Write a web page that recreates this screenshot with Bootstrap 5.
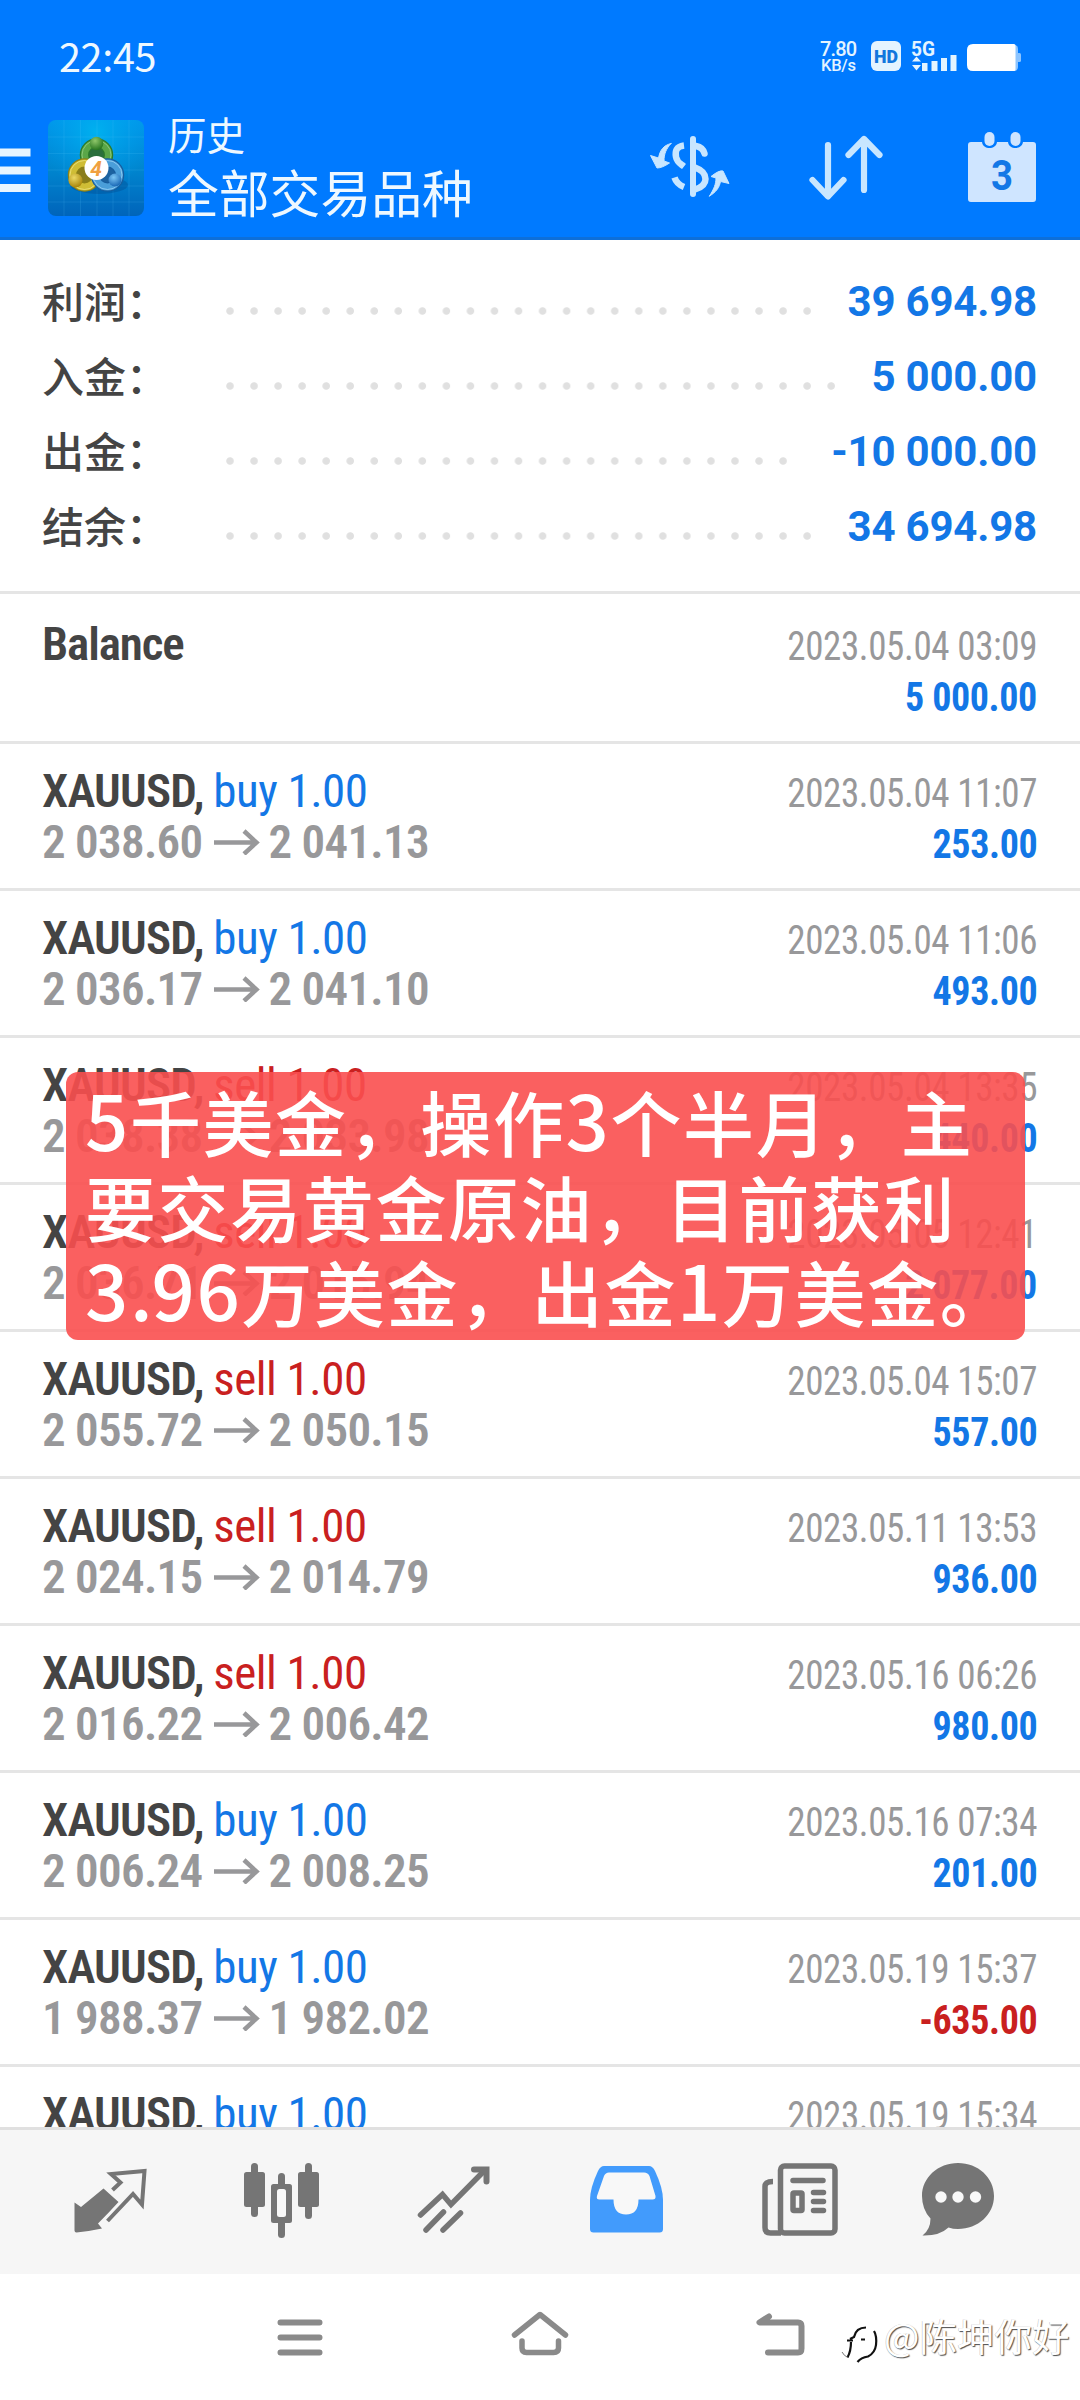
<!DOCTYPE html>
<html lang="zh-CN">
<head>
<meta charset="utf-8">
<meta name="viewport" content="width=device-width, initial-scale=1">
<title>历史</title>
<link href="https://cdn.jsdelivr.net/npm/bootstrap@5.3.0/dist/css/bootstrap.min.css" rel="stylesheet">
<style>
  body { font-family: Roboto, "Noto Sans CJK SC", sans-serif; color: #444; background: #fff; }
  svg { display: block; flex: none; }
  .screen { width: 1080px; height: 2400px; }
  .cjk { font-family: "Noto Sans CJK SC", sans-serif; }

  .app-header { height: 240px; background: #007aff; border-bottom: 3px solid #0d6fd9; color: #eef8ff; }
  .status-bar { height: 114px; padding: 0 57px 0 59px; }
  .clock { font-size: 39.5px; line-height: 110px; height: 114px; letter-spacing: -.3px; }
  .title-row { height: 108px; }
  .title-sub { font-size: 38.5px; line-height: 39px; font-weight: 400; }
  .title-main { font-size: 50.8px; line-height: 60px; padding-top: 8px; font-weight: 400; }

  .summary { padding: 24px 43px 0 42px; height: 354px; border-bottom: 3px solid #e5e5e5; }
  .sum-line { height: 75px; }
  .sum-label { font-size: 42px; line-height: 72px; height: 75px; width: 184px; font-weight: 500; }
  .dots { height: 8px; margin-top: 18px; background: radial-gradient(circle at 4px 4px, #e0e0e0 3.3px, transparent 4.2px) 0 0 / 24.05px 8px repeat-x; }
  .sum-value { font-size: 42px; font-weight: 700; line-height: 79px; color: #1377e6; letter-spacing: -.2px; }

  .history { height: 1533px; overflow: hidden; }
  .deal { height: 147px; padding: 21px 43px 0 42px; border-bottom: 3px solid #e5e5e5; font-family: "Roboto Condensed", Roboto, sans-serif; }
  .deal-balance { height: 150px; padding-top: 24px; }
  .deal-balance .profit { padding-top: 3px; }
  .deal-line { height: 51px; line-height: 51px; }
  .sym { font-size: 47px; font-weight: 600; color: #444; letter-spacing: -.8px; }
  .deal-balance .sym { letter-spacing: -1.1px; }
  .side { font-size: 47px; letter-spacing: -.5px; margin-left: 6px; }
  .buy { color: #1377e6; }
  .sell { color: #c9201f; }
  .price { font-size: 47px; font-weight: 600; color: #98989a; letter-spacing: -.7px; }
  .stamp { font-size: 40px; color: #98989a; letter-spacing: -.4px; transform: scaleX(.925); transform-origin: right; }
  .profit { font-size: 40px; font-weight: 700; letter-spacing: -.4px; transform: scaleX(.95); transform-origin: right; }

  .caption-box { left: 66px; top: 1072px; width: 959px; height: 268px; border-radius: 12px; background: rgba(250,79,79,.9); color: #fff; padding: 6px 0 0 19px; font-size: 71px; line-height: 85px; font-weight: 500; letter-spacing: 1.6px; white-space: nowrap; }
  .num { font-size: 76px; letter-spacing: 1.6px; line-height: 1; }
  .pt { letter-spacing: -1px; }

  .tab-bar { height: 147px; background: #f6f6f6; border-top: 3px solid #e0e0e0; padding-left: 24px; }
  .nav-keys { height: 126px; }
  .signature { left: 838px; top: 2311px; color: #fff; font-size: 37.5px; line-height: 48px; text-shadow: 1px 1px 1px rgba(0,0,0,.7), -.5px 0 0 rgba(0,0,0,.25); }
</style>
</head>
<body>
<div class="screen position-relative overflow-hidden">

  <header class="app-header">
    <div class="status-bar d-flex justify-content-between align-items-center">
      <span class="clock cjk">22:45</span>
      <svg width="208" height="48" viewBox="814 34 208 48" fill="#e4f4ff">
        <g font-family="Roboto, sans-serif" font-weight="500">
          <text x="819" y="56.5" font-size="20" textLength="37">7.80</text>
          <text x="820" y="72" font-size="16.5" textLength="35">KB/s</text>
          <text x="910" y="57" font-size="20" font-weight="700" textLength="24" lengthAdjust="spacingAndGlyphs">5G</text>
        </g>
        <rect x="870" y="42" width="30" height="30" rx="6"/>
        <text x="873" y="64" font-size="19" font-weight="900" fill="#1277dd" font-family="Roboto, sans-serif" textLength="24" lengthAdjust="spacingAndGlyphs">HD</text>
        <path d="M911 62.500h9l-4.500-5zM911 66h9l-4.500 5.500z"/>
        <path d="M921 64h5.500v8h-5.500zM930.500 62h6v10h-6zM940 59h6v13h-6zM949.500 56h6v16h-6z"/>
        <rect x="1008" y="46" width="9" height="26" rx="4" fill="#8cc4ff"/>
        <rect x="1016" y="54" width="4" height="9" rx="1.500" fill="#8cc4ff"/>
        <path d="M972 45h41q1.500 0 1.500 1.500v24q0 1.500-1.500 1.500h-41q-6 0-6-6V51q0-6 6-6z" fill="#fff"/>
      </svg>
    </div>

    <div class="title-row d-flex align-items-start">
      <svg width="168" height="110" viewBox="0 114 168 110">
        <defs>
          <linearGradient id="tile" x1="0" y1="0" x2="0" y2="1"><stop offset="0" stop-color="#0097ea"/><stop offset=".5" stop-color="#0086cf"/><stop offset="1" stop-color="#0064ba"/></linearGradient>
          <radialGradient id="glow" cx=".5" cy=".12" r=".6"><stop offset="0" stop-color="#00b4f0" stop-opacity=".9"/><stop offset="1" stop-color="#00a0f0" stop-opacity="0"/></radialGradient>
          <radialGradient id="green" cx=".4" cy=".3" r=".7"><stop offset="0" stop-color="#8fc76a"/><stop offset="1" stop-color="#26751f"/></radialGradient>
          <radialGradient id="gold" cx=".4" cy=".3" r=".7"><stop offset="0" stop-color="#ecd964"/><stop offset="1" stop-color="#a9850c"/></radialGradient>
          <radialGradient id="azure" cx=".4" cy=".3" r=".7"><stop offset="0" stop-color="#7cc6f4"/><stop offset="1" stop-color="#1a68b6"/></radialGradient>
        </defs>
        <path d="M0 148.500h30.500v8H0zM0 166.500h30.500v8H0zM0 184h30.500v8H0z" fill="#e8f5ff"/>
        <rect x="48" y="120" width="96" height="96" rx="8" fill="url(#tile)"/>
        <rect x="48" y="120" width="96" height="96" rx="8" fill="url(#glow)"/>
        <path d="M64 120v96M80.500 120v96M97 120v96M113 120v96M129 120v96M48 137h96M48 153.500h96M48 170h96M48 186h96M48 202h96" stroke="#5fd0ff" stroke-opacity=".15"/>
        <ellipse cx="99" cy="185" rx="29" ry="9" fill="#003f80" opacity=".3"/>
        <circle cx="96.500" cy="155" r="12" fill="#2a6f3c" stroke="#2c7a2b" stroke-width="9.500"/>
        <circle cx="96.500" cy="155" r="12" fill="none" stroke="#5aa648" stroke-width="7"/>
        <circle cx="96.500" cy="155" r="14.500" fill="none" stroke="#9fd48a" stroke-width="1" opacity=".7"/>
        <circle cx="84.500" cy="175" r="12" fill="#8a7d1a" stroke="#8d8117" stroke-width="9.500"/>
        <circle cx="84.500" cy="175" r="12" fill="none" stroke="#cfbd35" stroke-width="7"/>
        <circle cx="84.500" cy="175" r="14.500" fill="none" stroke="#f3ea8c" stroke-width="1" opacity=".7"/>
        <circle cx="107.500" cy="175" r="12" fill="#1c62a0" stroke="#175d9e" stroke-width="9.500"/>
        <circle cx="107.500" cy="175" r="12" fill="none" stroke="#4a9ed9" stroke-width="7"/>
        <circle cx="107.500" cy="175" r="14.500" fill="none" stroke="#a6dafa" stroke-width="1" opacity=".7"/>
        <circle cx="96.500" cy="143.500" r="6.800" fill="url(#green)"/>
        <circle cx="75.500" cy="180.500" r="7" fill="url(#gold)"/>
        <circle cx="115" cy="180" r="6.500" fill="url(#azure)"/>
        <circle cx="96.500" cy="168" r="12" fill="#fff"/>
        <text x="96" y="175.500" text-anchor="middle" font-family="Roboto, sans-serif" font-weight="700" font-style="italic" font-size="21" fill="#f0a040">4</text>
      </svg>
      <div class="cjk flex-grow-1">
        <div class="title-sub">历史</div>
        <div class="title-main">全部交易品种</div>
      </div>
      <svg class="me-auto" width="440" height="90" viewBox="640 114 440 90" fill="#c8e6ff" stroke="#c8e6ff" stroke-linecap="round" stroke-linejoin="round">
        <path d="M693 139v55" fill="none" stroke-width="6"/>
        <path d="M684 145.500c-8 1-9 6-8 11.500s4 6.500 8 9.500M674.500 177.500c1.500 4.500 4.500 7.500 9.500 9.500" fill="none" stroke-width="6.500" stroke-linecap="butt"/>
        <path d="M696 146c5 1 7.500 3.500 8.500 7.500M695 167.500c7 2.500 10.500 6.500 10.500 11.500s-4 8.500-10.500 10.500" fill="none" stroke-width="6.500"/>
        <path d="M671 143.500c-8 2-11 7-12.500 14.500l-8-2.500 6.500 12.500q5 0 12.500-5l-5.500-2c0-7 2-12 7-17.500z" stroke-width="1"/>
        <path d="M709.500 196c7-4 10-9 11-14.500l8.500 2-6-12.500q-4-1-12 5.500l5 1.500c0 6-2 11-6.500 18z" stroke-width="1"/>
        <path d="M828 145v51M812.500 180l15.500 16.500L843.500 180M864 190v-51M848.500 155L864 139l15.500 16" fill="none" stroke-width="6.200"/>
        <g fill="#cfe5ff" stroke="none">
          <path d="M971 142h11c1 8 14 8 15 0h11c1 8 14 8 15 0h10q3 0 3 3v54q0 3-3 3h-62q-3 0-3-3v-54q0-3 3-3z"/>
          <rect x="984.500" y="132" width="10" height="14" rx="5"/>
          <rect x="1010.500" y="132" width="10" height="14" rx="5"/>
        </g>
        <text x="1002" y="189.500" text-anchor="middle" font-family="Roboto, sans-serif" font-weight="700" font-size="43" fill="#1377e6" stroke="none" textLength="22" lengthAdjust="spacingAndGlyphs">3</text>
      </svg>
    </div>
  </header>

  <section class="summary">
    <div class="sum-line d-flex align-items-center"><div class="sum-label cjk">利润：</div><div class="dots" style="width:586px"></div><div class="sum-value ms-auto">39 694.98</div></div>
    <div class="sum-line d-flex align-items-center"><div class="sum-label cjk">入金：</div><div class="dots" style="width:610px"></div><div class="sum-value ms-auto">5 000.00</div></div>
    <div class="sum-line d-flex align-items-center"><div class="sum-label cjk">出金：</div><div class="dots" style="width:562px"></div><div class="sum-value ms-auto">-10 000.00</div></div>
    <div class="sum-line d-flex align-items-center"><div class="sum-label cjk">结余：</div><div class="dots" style="width:586px"></div><div class="sum-value ms-auto">34 694.98</div></div>
  </section>

  <main class="history" id="history"></main>

  <nav class="tab-bar d-flex">
    <svg width="172" height="144" viewBox="24 2130 172 144" fill="none" stroke="#757575" stroke-width="4">
      <path d="M103.500 2188.500l15 13.500q-11 12-20.500 21.500l4 5q-14 3-25.500 4-2 0-2-2v-28l6.500 4.500z" fill="#757575" stroke="none"/>
      <path d="M112.500 2190l8-7.500-9.500-8.500 33.500-3-2.500 33.500-9-10.500-25.500 27"/>
    </svg>
    <svg width="172" height="144" viewBox="196 2130 172 144" fill="#757575">
      <rect x="244" y="2172" width="21" height="35" rx="2.500"/><rect x="251" y="2163" width="7" height="54" rx="3.500"/>
      <rect x="298" y="2172" width="21" height="35" rx="2.500"/><rect x="305" y="2163" width="7" height="56" rx="3.500"/>
      <rect x="278" y="2173" width="7" height="65" rx="3.500"/>
      <rect x="271" y="2184" width="21" height="39" rx="2.500"/><rect x="277" y="2189" width="9" height="28" rx="2.500" fill="#f8f8f8"/>
    </svg>
    <svg width="172" height="144" viewBox="368 2130 172 144" fill="none" stroke="#757575" stroke-width="5.500" stroke-linecap="round">
      <path d="M420.500 2215l22-20.500 8.500 10 33.500-34M426 2230l17.500-18M443 2230l17.500-17"/>
      <path d="M474 2169.500h12.500v12" stroke-width="6"/>
    </svg>
    <svg width="172" height="144" viewBox="540 2130 172 144">
      <path d="M604 2166h45q3.500 0 6 5 8 17 8 29v29q0 3.500-3.500 3.500h-66q-3.500 0-3.500-3.500v-29q0-12 8-29 2.500-5 6-5z" fill="#429bfc"/>
      <path d="M609 2172.500h35q4 0 5.500 3.500l6 20q.5 3.500-3 3.500h-14q0 15-12.500 15t-12.500-15h-14q-3.500 0-2.500-3.500l7-20q1.500-3.500 5-3.500z" fill="#f8f8f8"/>
    </svg>
    <svg width="172" height="144" viewBox="712 2130 172 144" fill="none" stroke="#757575" stroke-width="5.500">
      <rect x="780.500" y="2166" width="54.500" height="67" rx="4"/>
      <path d="M773 2181.500q-8 0-8 5v41q0 5.500 5.500 5.500H781"/>
      <path d="M793 2180.500h30M813.500 2192.500h10M813.500 2201.500h10M813.500 2210.500h10" stroke-linecap="round"/>
      <rect x="793" y="2193" width="9" height="17.500" rx="1"/>
    </svg>
    <svg width="172" height="144" viewBox="884 2130 172 144">
      <path d="M958 2163c20 0 36 14.500 36 33s-16 33-36 33q-5 0-9.500-1.500-9 8.500-26 8 8-6 8-17-8.500-9-8.500-22.500c0-18.500 16-33 36-33z" fill="#757575"/>
      <g fill="#f8f8f8"><circle cx="941" cy="2197" r="5.700"/><circle cx="958" cy="2197" r="5.700"/><circle cx="975.500" cy="2197" r="5.700"/></g>
    </svg>
  </nav>

  <div class="nav-keys d-flex justify-content-center">
    <svg width="1080" height="126" viewBox="0 2274 1080 126" fill="none" stroke="#8a8a8a" stroke-width="6" stroke-linecap="round" stroke-linejoin="round">
      <path d="M280.500 2322.500h39M280.500 2337.500h39M280.500 2352.500h39"/>
      <path d="M514.500 2335l25.500-20.500 25.500 20.500M522 2341v7q0 4.500 4.500 4.500h27q5 0 5-4.500v-7" stroke-width="5.500"/>
      <path d="M769 2316.500l-9.500 6H798q3.500 0 3.500 3.500v22.500q0 4-3.500 4h-30"/>
    </svg>
  </div>

  <div class="caption-box position-absolute cjk">
    <div><span class="num">5</span>千美金，操作<span class="num">3</span>个半月，主</div>
    <div>要交易黄金原油，目前获利</div>
    <div><span class="num">3<span class="pt">.</span>96</span>万美金，出金<span class="num">1</span>万美金。</div>
  </div>

  <div class="signature position-absolute d-flex align-items-center cjk">
    <svg width="46" height="48" viewBox="838 2311 46 48" fill="none" stroke="#111" stroke-width="2.200" overflow="visible">
      <path d="M866 2327.500q-10 0-12 9.500l-4 2M847 2340.500h6M861 2339.500h4M851 2342q0 9-3.500 15.500"/>
      <path d="M874 2331q3 5 2 14-1 8-8 11.500-7 1-10.500 5.500"/>
      <path d="M842 2352q2 4 6 5.500" stroke-width="1" stroke="#777"/>
    </svg>
    <span>@陈坤你好</span>
  </div>
</div>

<script>
  const deals = [
    ['buy', '2 038.60', '2 041.13', '2023.05.04 11:07', '253.00'],
    ['buy', '2 036.17', '2 041.10', '2023.05.04 11:06', '493.00'],
    ['sell', '2 038.38', '2 033.98', '2023.05.04 13:35', '440.00'],
    ['sell', '2 036.71', '2 015.94', '2023.05.05 12:41', '2 077.00'],
    ['sell', '2 055.72', '2 050.15', '2023.05.04 15:07', '557.00'],
    ['sell', '2 024.15', '2 014.79', '2023.05.11 13:53', '936.00'],
    ['sell', '2 016.22', '2 006.42', '2023.05.16 06:26', '980.00'],
    ['buy', '2 006.24', '2 008.25', '2023.05.16 07:34', '201.00'],
    ['buy', '1 988.37', '1 982.02', '2023.05.19 15:37', '-635.00'],
    ['buy', '', '', '2023.05.19 15:34', '']
  ];
  const arrow = '<svg width="46" height="26" viewBox="0 0 46 26" fill="none" stroke="#98989a" stroke-width="4.500"><path d="M0 13.500h42M30 2l12.500 11.500L30 25"/></svg>';
  const prices = (from, to) => from ? `<span class="price">${from}</span><span class="px-2 ms-1">${arrow}</span><span class="price">${to}</span>` : '';
  document.getElementById('history').innerHTML =
    `<div class="deal deal-balance">
      <div class="deal-line d-flex justify-content-between align-items-baseline"><span class="sym">Balance</span><span class="stamp">2023.05.04 03:09</span></div>
      <div class="deal-line d-flex justify-content-end align-items-baseline"><span class="profit buy">5 000.00</span></div>
    </div>` +
    deals.map(([side, from, to, at, sum]) => `<div class="deal">
      <div class="deal-line d-flex justify-content-between align-items-baseline">
        <span><span class="sym">XAUUSD,</span> <span class="side ${side}">${side} 1.00</span></span><span class="stamp">${at}</span>
      </div>
      <div class="deal-line d-flex justify-content-between align-items-baseline">
        <span class="d-flex align-items-center">${prices(from, to)}</span><span class="profit ${sum[0] === '-' ? 'sell' : 'buy'}">${sum}</span>
      </div>
    </div>`).join('');
</script>
<script src="https://cdn.jsdelivr.net/npm/bootstrap@5.3.0/dist/js/bootstrap.bundle.min.js"></script>
</body>
</html>
